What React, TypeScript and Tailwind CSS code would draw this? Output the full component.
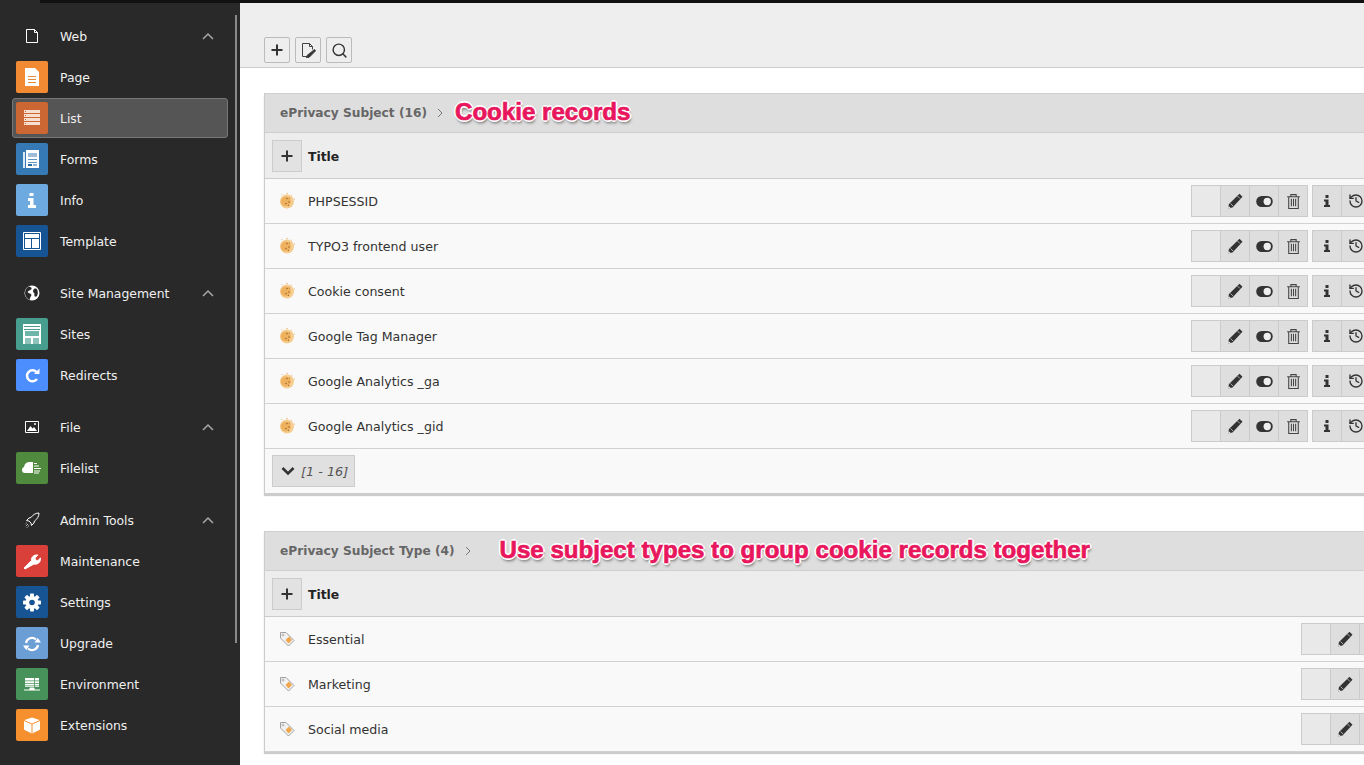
import { History, Search } from "lucide-react";
import type { ReactNode } from "react";

const font = "font-['DejaVu_Sans',Verdana,sans-serif]";

function Tile({ bg, children }: { bg: string; children: ReactNode }) {
  return (
    <span className={`flex h-8 w-8 shrink-0 items-center justify-center rounded-[2px] ${bg}`}>
      <svg viewBox="0 0 32 32" className="h-8 w-8" fill="#fff">
        {children}
      </svg>
    </span>
  );
}

const tiles: Record<string, ReactNode> = {
  page: (
    <Tile bg="bg-[#f28a33]">
      <path d="M9 7h10l4 4v14H9z" fill="#fff" />
      <path d="M12 15h8v1h-8zM12 18h8v1h-8zM12 21h8v1h-8z" fill="#e8893a" />
    </Tile>
  ),
  list: (
    <Tile bg="bg-[#cc6633]">
      <path d="M8 8h16v3H8zM8 12h16v3H8zM8 16h16v3H8zM8 20h16v3H8z" fill="#f7dfcf" />
      <path d="M9 9h1v1H9zM9 13h1v1H9zM9 17h1v1H9zM9 21h1v1H9z" fill="#cc6633" />
    </Tile>
  ),
  forms: (
    <Tile bg="bg-[#357ab5]">
      <path d="M7 9h2v16H7z" fill="#dce9f4" />
      <path d="M10 7h13v18H10z" fill="#fff" />
      <path d="M12 10h9v4h-9z" fill="#9dbcd8" />
      <path d="M12 16h9v1h-9zM12 19h9v1h-9z" fill="#5f95c3" />
      <path d="M12 21h4v2h-4z" fill="#2b6a9f" />
      <path d="M17 21h4v2h-4z" fill="#8fb4d4" />
    </Tile>
  ),
  info: (
    <Tile bg="bg-[#6daae0]">
      <path d="M13.500 9h4v3h-4zM12 14h5.500v7H20v3h-8v-3h2v-4h-2z" />
    </Tile>
  ),
  template: (
    <Tile bg="bg-[#175493]">
      <path d="M7.500 7.500h17v17h-17z" fill="none" stroke="#fff" />
      <path d="M9 9h14v4H9zM9 14h6v9H9zM16 14h7v9h-7z" />
    </Tile>
  ),
  sites: (
    <Tile bg="bg-[#479e8f]">
      <path d="M7 6h18v20H7z" />
      <path d="M8 8h16v1H8zM8 11h16v1H8z" fill="#479e8f" />
      <path d="M9 13h14v5H9z" fill="#6db5a8" />
      <path d="M9 20h6v6H9zM17 20h6v6h-6z" fill="#8cc4ba" />
    </Tile>
  ),
  redirects: (
    <Tile bg="bg-[#4d8eff]">
      <path d="M21 20a5.500 5.500 0 1 1-.5-7" fill="none" stroke="#fff" strokeWidth="2.400" />
      <path d="M18 15h5.500V9.500z" />
    </Tile>
  ),
  filelist: (
    <Tile bg="bg-[#4f8a3e]">
      <path d="M6 18a3 3 0 0 1 2-3a6 6 0 0 1 6-5h3v11H9a3 3 0 0 1-3-3z" />
      <path d="M18 11h3v1h-3zM18 13.500h5v1h-5zM18 16h7v1h-7zM18 18.500h6v1h-6zM18 20.500h5v1h-5z" />
    </Tile>
  ),
  maintenance: (
    <Tile bg="bg-[#d9403a]">
      <path d="M9 24l-1-1 7.500-7.500c-.5-3 2-6 6.500-5.500l-3 2.800.5 2.200 2.200.8 2.800-2.800c.5 4-3 7-6.500 6z" stroke="#fff" strokeWidth="1" strokeLinejoin="round" />
    </Tile>
  ),
  settings: (
    <Tile bg="bg-[#175493]">
      <g>
        <rect x="14" y="7.500" width="4" height="18" rx=".8" />
        <rect x="14" y="7.500" width="4" height="18" rx=".8" transform="rotate(45 16 16.500)" />
        <rect x="14" y="7.500" width="4" height="18" rx=".8" transform="rotate(90 16 16.500)" />
        <rect x="14" y="7.500" width="4" height="18" rx=".8" transform="rotate(135 16 16.500)" />
        <circle cx="16" cy="16.500" r="6.500" />
        <circle cx="16" cy="16.500" r="2.800" fill="#175493" />
      </g>
    </Tile>
  ),
  upgrade: (
    <Tile bg="bg-[#6c9ed6]">
      <path d="M10 16a6 6 0 0 1 10-3.500" fill="none" stroke="#fff" strokeWidth="2.200" />
      <path d="M18.500 15.500h6.500l-3.200-4.500z" />
      <path d="M22 18a6 6 0 0 1-10 3.500" fill="none" stroke="#fff" strokeWidth="2.200" />
      <path d="M7 18.500h6.500l-3.300 4.500z" />
    </Tile>
  ),
  environment: (
    <Tile bg="bg-[#47925a]">
      <path d="M9 10h14v9H9z" />
      <path d="M9 12.500h14v.8H9zM9 15h14v.8H9zM9 17.500h14v.8H9zM18 10h.8v9H18z" fill="#47925a" />
      <path d="M14 19.500h4l1 2h-6zM8 21.500h16v1H8z" />
    </Tile>
  ),
  extensions: (
    <Tile bg="bg-[#f68f2e]">
      <path d="M16 9l7.500 2.500v9L16 24l-7.500-3.500v-9z" stroke="#fff" strokeWidth="1" strokeLinejoin="round" />
      <path d="M8 11.500l8 3.500 8-3.500M16 15v9" fill="none" stroke="#f68f2e" strokeWidth="1" />
    </Tile>
  ),
};

function Caret() {
  return (
    <svg viewBox="0 0 12 8" className="ml-auto mr-[10px] h-2 w-3" fill="none" stroke="#a8a8a8" strokeWidth="1.500">
      <path d="M1 7l5-5 5 5" />
    </svg>
  );
}

function GroupHead({ icon, label }: { icon: ReactNode; label: string }) {
  return (
    <div className="flex h-[41px] items-center px-[16px] text-[12.4px] text-[#f0f0f0]">
      <span className="flex w-8 shrink-0 justify-center">{icon}</span>
      <span className="ml-3 pt-[4px]">{label}</span>
      <Caret />
    </div>
  );
}

function NavItem({ tile, label, active }: { tile: string; label: string; active?: boolean }) {
  return (
    <div className="h-[41px] px-3 pt-px">
      <div
        className={`flex h-[40px] items-center gap-3 rounded-[3px] border pb-px pl-[3px] text-[12.4px] text-[#f0f0f0] ${
          active ? "border-[#777] bg-[#555]" : "border-transparent"
        }`}
      >
        {tiles[tile]}
        <span className="pt-[4px]">{label}</span>
      </div>
    </div>
  );
}

function Sidebar() {
  return (
    <aside className="relative flex w-[240px] shrink-0 flex-col gap-[11px] bg-[#292929] pt-[15px]">
      <div className="absolute left-10 right-0 top-0 h-[3px] bg-[#111]" />
      <div className="absolute left-[235px] top-[15px] h-[628px] w-[2px] bg-[#8a8a8a]" />
      <div>
        <GroupHead
          label="Web"
          icon={
            <svg viewBox="0 0 16 16" className="h-4 w-4" fill="none" stroke="#fff" strokeWidth="1">
              <path d="M2.500 1.500h8l3 3v10h-11zM10.500 1.500v3h3" />
            </svg>
          }
        />
        <NavItem tile="page" label="Page" />
        <NavItem tile="list" label="List" active />
        <NavItem tile="forms" label="Forms" />
        <NavItem tile="info" label="Info" />
        <NavItem tile="template" label="Template" />
      </div>
      <div>
        <GroupHead
          label="Site Management"
          icon={
            <svg viewBox="0 0 16 16" className="h-4 w-4">
              <circle cx="8" cy="8" r="7.500" fill="#fff" />
              <path d="M5 1.500c2 .5 3 1 2.500 2.500S5 5 4 6.500 6 8 7 9s0 2-.5 3-1 2-.5 3C3 14 1 11.500 1 8s2-6 4-6.500zM10 4c1.500-1 3-.5 3.500 1.500S14 9 13 11c-1 1-2 1-2.500 0S11 8.500 10 8 8.500 5 10 4z" fill="#292929" />
            </svg>
          }
        />
        <NavItem tile="sites" label="Sites" />
        <NavItem tile="redirects" label="Redirects" />
      </div>
      <div>
        <GroupHead
          label="File"
          icon={
            <svg viewBox="0 0 16 16" className="h-4 w-4">
              <path d="M1.500 2.500h13v11h-13z" fill="none" stroke="#fff" />
              <path d="M3 12l3.500-5 2 2.500L10 8l3 4z" fill="#fff" />
              <circle cx="11" cy="5" r="1" fill="#fff" />
            </svg>
          }
        />
        <NavItem tile="filelist" label="Filelist" />
      </div>
      <div>
        <GroupHead
          label="Admin Tools"
          icon={
            <svg viewBox="0 0 16 16" className="h-4 w-4" fill="none" stroke="#fff" strokeWidth="1">
              <path d="M15 1c-3 0-6 1.500-8 4.500L5 6 2.500 8.500 5 9l2 2 .5 2.500L10 11l.5-2C13.500 7 15 4 15 1z" />
              <path d="M4 12l-2.500 2.500M5 13.500L3 15.500M2.500 11L1 12.500" strokeDasharray="1 1" />
            </svg>
          }
        />
        <NavItem tile="maintenance" label="Maintenance" />
        <NavItem tile="settings" label="Settings" />
        <NavItem tile="upgrade" label="Upgrade" />
        <NavItem tile="environment" label="Environment" />
        <NavItem tile="extensions" label="Extensions" />
      </div>
    </aside>
  );
}

function Plus() {
  return (
    <svg viewBox="0 0 16 16" className="h-4 w-4" fill="#333">
      <path d="M7 2.500h2V7h4.500v2H9v4.500H7V9H2.500V7H7z" />
    </svg>
  );
}

function ToolButton({ children }: { children: ReactNode }) {
  return (
    <button className="flex h-[26px] w-[26px] items-center justify-center rounded-[2px] border border-[#bbb] bg-[#eee]">
      {children}
    </button>
  );
}

function Pencil() {
  return (
    <svg viewBox="0 0 16 16" className="h-4 w-4">
      <path d="M12.500 .8l3 3L5.500 14.500l-4.500 1 1-4.500z" fill="#333" />
      <path d="M3.500 10.500l2.500 2.500M10.500 3l2.500 2.500" stroke="#ccc" strokeWidth=".8" />
      <path d="M1 15.500l.6-2.600 2 2z" fill="#eee" />
    </svg>
  );
}

function ActionButton({ children, soft }: { children?: ReactNode; soft?: boolean }) {
  return (
    <span
      className={`-ml-px flex h-8 w-[30px] items-center justify-center border border-[#cbcbcb] first:ml-0 ${
        soft ? "bg-[#e9e9e9]" : "bg-[#dedede]"
      }`}
    >
      {children}
    </span>
  );
}

function Actions({ tools }: { tools: boolean }) {
  return (
    <div className="flex shrink-0 gap-[4px]">
      <div className="flex">
        <ActionButton soft />
        <ActionButton>
          <Pencil />
        </ActionButton>
        <ActionButton>
          <svg viewBox="0 0 18 12" className="h-[11px] w-[17px]">
            <rect x="0" y="0" width="18" height="12" rx="6" fill="#333" />
            <circle cx="12" cy="6" r="4" fill="#eee" />
          </svg>
        </ActionButton>
        <ActionButton>
          <svg viewBox="0 0 16 16" className="h-[17px] w-[17px]" fill="none" stroke="#444" strokeWidth="1">
            <path d="M2 3.500h12M5.500 3.500V1.500h5v2M3.500 3.500v11h9v-11M6 5.500v7M8 5.500v7M10 5.500v7" />
          </svg>
        </ActionButton>
      </div>
      {tools && (
        <div className="flex">
          <ActionButton>
            <svg viewBox="0 0 16 16" className="h-4 w-4" fill="#333">
              <path d="M6.500 2h3v3h-3zM5 6.500h4.500V12H11v2H5v-2h1.500V8.500H5z" />
            </svg>
          </ActionButton>
          <ActionButton>
            <History size={16} strokeWidth={2} color="#333" />
          </ActionButton>
          <ActionButton />
          <ActionButton />
        </div>
      )}
    </div>
  );
}

function CookieIcon() {
  return (
    <svg viewBox="0 0 16 16" className="h-4 w-4 overflow-visible">
      <circle cx="8" cy="8.500" r="7" fill="#f5cd90" />
      <circle cx="6.800" cy="8.500" r="5" fill="#eeb25f" />
      <circle cx="8" cy="0.500" r=".7" fill="#e8b070" />
      <circle cx="15.500" cy="6" r=".6" fill="#e8b070" />
      <circle cx="3" cy="1.500" r=".5" fill="#e8b070" />
      <circle cx="12.500" cy="2" r=".5" fill="#e8b070" />
      <circle cx="8" cy="5.500" r=".8" fill="#a5672b" />
      <circle cx="10" cy="9" r=".8" fill="#a5672b" />
      <circle cx="7" cy="10.500" r=".8" fill="#a5672b" />
      <circle cx="10.500" cy="5" r=".6" fill="#a5672b" />
      <circle cx="9.500" cy="12.500" r=".7" fill="#a5672b" />
    </svg>
  );
}

function TagIcon() {
  return (
    <svg viewBox="0 0 16 16" className="h-4 w-4">
      <path d="M1.500 1.500h5.500l8 8-5.500 5.500-8-8z" fill="#f2f2f2" stroke="#a0a0a0" strokeWidth="1" />
      <path d="M6.500 9l3.500-3.500 3 3.500-3.500 3.500z" fill="#f0a54a" />
      <circle cx="4" cy="4" r="1" fill="#fff" stroke="#888" strokeWidth=".6" />
    </svg>
  );
}

function Row({ label, icon, tools }: { label: string; icon: ReactNode; tools: boolean }) {
  return (
    <div className="flex h-[45px] items-center border-b border-[#d2d2d2] bg-[#f9f9f9] pl-[14px] pr-2 text-[12.6px] text-[#333]">
      <span className="flex w-4 justify-center">{icon}</span>
      <span className="ml-[13px] flex-1 pt-[2px]">{label}</span>
      <Actions tools={tools} />
    </div>
  );
}

function Annotation({ children, className }: { children: string; className: string }) {
  return (
    <span
      className={`pb-[2px] font-['Liberation_Sans',Arial,sans-serif] text-[24.1px] font-bold text-[#e8175d] [-webkit-text-stroke:0.7px_#e8175d] [text-shadow:-2px_0_0_#fff,2px_0_0_#fff,0_-2px_0_#fff,0_2px_0_#fff,-1px_-1px_0_#fff,1px_-1px_0_#fff,-1px_1px_0_#fff,1px_1px_0_#fff,1px_3px_3px_#666] ${className}`}
    >
      {children}
    </span>
  );
}

function Panel({
  title,
  note,
  noteClass,
  width,
  rows,
  icon,
  tools,
  footer,
}: {
  title: string;
  note: string;
  noteClass: string;
  width: string;
  rows: string[];
  icon: ReactNode;
  tools: boolean;
  footer?: boolean;
}) {
  return (
    <section className={`shrink-0 border-l border-[#ccc] shadow-[0_2px_1px_rgba(0,0,0,0.2)] ${width}`}>
      <div className="flex h-[40px] items-center border-b border-t border-[#cfcfcf] bg-[#dedede] pl-[15px]">
        <span className="text-[12.2px] font-bold text-[#666]">{title}</span>
        <svg viewBox="0 0 8 10" className="ml-[9px] h-[10px] w-2" fill="none" stroke="#777" strokeWidth="1">
          <path d="M2 1l4 4-4 4" />
        </svg>
        <Annotation className={noteClass}>{note}</Annotation>
      </div>
      <div className="flex h-[46px] items-center border-b border-[#ccc] bg-[#ededed] pl-[7px] text-[12.4px] font-bold text-[#222]">
        <span className="flex h-8 w-[30px] items-center justify-center border border-[#ccc] bg-[#e2e2e2]">
          <Plus />
        </span>
        <span className="ml-[6px] pt-[4px]">Title</span>
      </div>
      {rows.map((r) => (
        <Row key={r} label={r} icon={icon} tools={tools} />
      ))}
      {footer && (
        <div className="flex h-[45px] items-center border-b border-[#ccc] bg-[#f9f9f9] pl-[7px]">
          <span className="flex h-8 w-[83px] items-center gap-[6px] border border-[#ccc] bg-[#e0e0e0] pl-2 text-[12.8px] italic text-[#555]">
            <svg viewBox="0 0 14 10" className="h-[10px] w-[14px]" fill="none" stroke="#333" strokeWidth="2.600">
              <path d="M1.500 2l5.500 5.500L12.500 2" />
            </svg>
            <span className="pt-[2px]">[1 - 16]</span>
          </span>
        </div>
      )}
    </section>
  );
}

export default function App() {
  return (
    <div className={`flex h-[765px] w-[1364px] overflow-hidden bg-white ${font}`}>
      <Sidebar />
      <main className="flex min-w-0 flex-1 flex-col">
        <div className="h-[3px] bg-[#111]" />
        <div className="flex h-[65px] items-start gap-[5px] border-b border-[#ccc] bg-[#eee] pl-[24px] pt-[34px]">
          <ToolButton>
            <Plus />
          </ToolButton>
          <ToolButton>
            <svg viewBox="0 0 16 16" className="h-4 w-4" fill="none" stroke="#444" strokeWidth="1">
              <path d="M9.500 14.500h-7v-13h7l3 3v3M9.500 1.500v3h3" />
              <path d="M14.500 7.500l1.200 1.200L9 15.500l-2.500.5.500-2.500z" fill="#333" />
            </svg>
          </ToolButton>
          <ToolButton>
            <Search size={17} strokeWidth={2} color="#333" />
          </ToolButton>
        </div>
        <div className="flex flex-col gap-[37px] pl-[24px] pt-[25px]">
          <Panel
            title="ePrivacy Subject (16)"
            note="Cookie records"
            noteClass="ml-[11px]"
            width="w-[1173px]"
            rows={["PHPSESSID", "TYPO3 frontend user", "Cookie consent", "Google Tag Manager", "Google Analytics _ga", "Google Analytics _gid"]}
            icon={<CookieIcon />}
            tools
            footer
          />
          <Panel
            title="ePrivacy Subject Type (4)"
            note="Use subject types to group cookie records together"
            noteClass="ml-[28px]"
            width="w-[1162px]"
            rows={["Essential", "Marketing", "Social media"]}
            icon={<TagIcon />}
            tools={false}
          />
        </div>
      </main>
    </div>
  );
}
